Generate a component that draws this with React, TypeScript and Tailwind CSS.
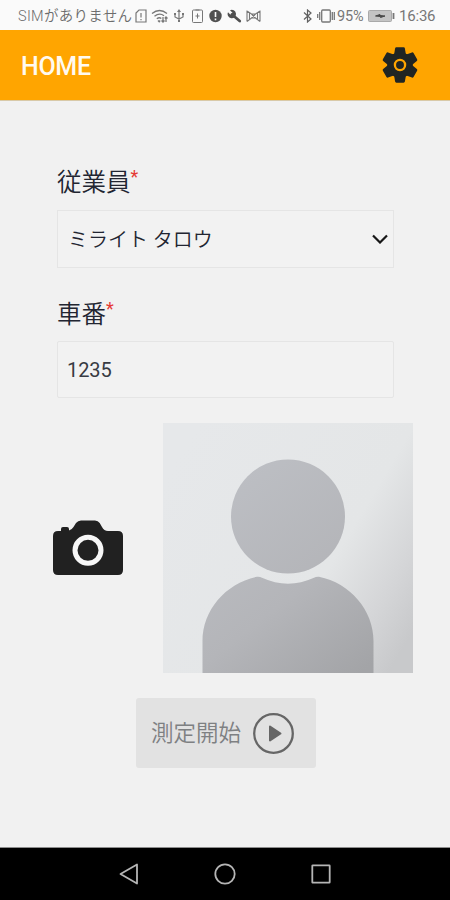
import { useState } from 'react';
import type { ReactNode } from 'react';

const employees = ['ミライト タロウ'];

function StatusBar() {
  return (
    <div className="flex h-[30px] items-center bg-[#fafafa] pl-[18px] pt-[2px] text-[#777777]">
      <span className="w-[117px] whitespace-nowrap pt-[2px] text-[14.5px] font-[350] leading-none tracking-[0.3px] text-[#6c6c6c]">SIMがありません</span>
      <svg width="12" height="14" viewBox="0 0 12 14" fill="none" stroke="currentColor" strokeWidth="1.2">
        <path d="M1 4 4 1h7v12H1zM6 4v4.500M6 10v1.300" />
      </svg>
      <svg className="ml-1" width="17" height="14" viewBox="0 0 17 14" fill="none" stroke="currentColor" strokeWidth="1.3">
        <path d="M1 4.5q7.500-6 15 0M3.500 7.300q5-4 9.500-.5M5.800 9.800q2.500-2 4.500-.3M7 11.500l1.200 1.300 1-1.300M12 8v5M10.500 11.500 12 13l1.500-1.500M15 13V8M13.800 9.500 15 8l1.500 1.500" />
      </svg>
      <svg className="ml-[5px]" width="12" height="14" viewBox="0 0 12 14" fill="none" stroke="currentColor" strokeWidth="1.2">
        <path d="M6 2v9M2 5.500V8l4 2 4-2V5.500" />
        <path d="m4 3 2-3 2 3zM1 4h2v2H1zM9 4h2v2H9zM5 11h2v2H5z" fill="currentColor" stroke="none" />
      </svg>
      <svg className="ml-[7px]" width="11" height="14" viewBox="0 0 11 14" fill="none" stroke="currentColor" strokeWidth="1">
        <rect x=".5" y="1" width="10" height="12.500" rx="1" />
        <path d="M3.500 1h4M5.500 4.500v5M3.500 7h4" />
      </svg>
      <svg className="ml-[6px] text-[#505050]" width="13" height="14" viewBox="0 0 13 14">
        <circle cx="6.500" cy="7" r="6.200" fill="currentColor" />
        <path d="M6.500 3v5M6.500 9.500v1.700" stroke="#fafafa" strokeWidth="1.600" />
      </svg>
      <svg className="ml-[5px] text-[#505050]" width="15" height="14" viewBox="0 0 15 14">
        <path d="M5 5.500 12.700 12" stroke="currentColor" strokeWidth="2.800" strokeLinecap="round" />
        <path d="M3 1.200A4.200 4.200 0 1 1 1 3.200L3.500 5.700 5.500 3.700Z" fill="currentColor" />
      </svg>
      <svg className="ml-1" width="15" height="14" viewBox="0 0 15 14" fill="none" stroke="currentColor" strokeWidth="1.100">
        <path d="M1 1.500v11M14 1.500v11M1 2l4.500 3h4L14 2M1 12.500 5.500 9h4l4.500 3.500M3.500 4v6M11.500 4v6M5.500 5l4 4M9.500 5l-4 4" />
      </svg>
      <svg className="ml-[42px] text-[#606060]" width="10" height="14" viewBox="0 0 10 14" fill="none" stroke="currentColor" strokeWidth="1.200">
        <path d="m1 3.500 7 6.500-3.500 3V1L8 4 1 10.500" />
      </svg>
      <svg className="ml-1" width="18" height="14" viewBox="0 0 18 14" fill="none" stroke="currentColor" strokeWidth="1.300">
        <rect x="4.700" y="1" width="8.600" height="12" rx="1" />
        <path d="M2.700 3v8M.7 5v4M15.300 3v8M17.300 3v8" />
      </svg>
      <span className="ml-[2px] w-[30px] pt-[2px] text-[14.500px] leading-none tracking-[-0.200px]">95%</span>
      <svg className="ml-[1px]" width="27" height="12" viewBox="0 0 27 12">
        <rect x=".5" y=".5" width="23" height="11" rx="1" fill="#c4c4c4" stroke="#a9a9a9" />
        <path d="M7.500 6 12 4.500v1l5 .5-4.500 1.500v-1Z" fill="#484848" stroke="#484848" />
        <path d="M25.500 3v6" stroke="currentColor" strokeWidth="1.800" />
      </svg>
      <span className="ml-[4px] pt-px text-[15px] leading-none tracking-[-0.200px]">16:36</span>
    </div>
  );
}

function GearIcon() {
  return (
    <svg width="36" height="36" viewBox="-18 -18 36 36" fill="#202523">
      <circle r="12.800" />
      {[0, 60, 120, 180, 240, 300].map((angle) => (
        <path
          key={angle}
          d="M-6-10-4.900-16.600Q-4.700-17.700-3.600-17.700H3.600Q4.700-17.700 4.900-16.600L6-10Z"
          transform={`rotate(${angle})`}
        />
      ))}
      <circle r="5.100" fill="none" stroke="#ffa500" strokeWidth="2.300" />
    </svg>
  );
}

function CameraIcon() {
  return (
    <svg width="70" height="56" viewBox="0 0 70 56">
      <path
        d="M5 11H8V9Q8 7 10 7H14Q16 7 16 9V10.500Q19 9.500 20.500 7L23 3Q25 .5 28 .5H42Q45 .5 46.700 3L49 7Q51 11 55 11H65Q70 11 70 16V50Q70 55 65 55H5Q0 55 0 50V16Q0 11 5 11Z"
        fill="#212121"
      />
      <circle cx="35" cy="30.300" r="13" fill="none" stroke="#f7f7f7" strokeWidth="5" />
    </svg>
  );
}

function PhotoPlaceholder() {
  return (
    <svg width="250" height="250" viewBox="0 0 250 250">
      <defs>
        <linearGradient id="backdrop" x1="0.050" y1="0.150" x2="1.050" y2="0.750">
          <stop offset="0" stopColor="#e6e8ea" />
          <stop offset=".64" stopColor="#e4e6e7" />
          <stop offset=".86" stopColor="#d4d5d7" />
          <stop offset="1" stopColor="#c8c9cb" />
        </linearGradient>
        <linearGradient id="person" gradientUnits="userSpaceOnUse" x1="70" y1="60" x2="210" y2="240">
          <stop offset="0" stopColor="#bcbec3" />
          <stop offset=".55" stopColor="#b4b5b9" />
          <stop offset="1" stopColor="#a3a4a7" />
        </linearGradient>
      </defs>
      <path d="M0 0H250V250H0Z" fill="url(#backdrop)" />
      <circle cx="125" cy="93.500" r="57" fill="url(#person)" />
      <path d="M39.500 250V218C39.500 187 63 160 94 153.700Q97 153.400 99 154.800Q125 166.500 151 154.800Q153 153.400 156 153.700C187 160 210.500 187 210.500 218V250Z" fill="url(#person)" />
    </svg>
  );
}

function Field({ label, children }: { label: string; children: ReactNode }) {
  return (
    <label className="block">
      <span className="flex h-9 items-start text-[24.500px] font-[350] leading-9 text-[#222531]">
        <span>{label}</span>
        <span className="font-['Roboto'] text-[18px] font-normal leading-[24px] text-[#e53935]">*</span>
      </span>
      {children}
    </label>
  );
}

export default function App() {
  const [employee, setEmployee] = useState(employees[0]);
  const [carNumber, setCarNumber] = useState('1235');

  return (
    <div className="flex h-[900px] w-[450px] flex-col overflow-hidden bg-[#f1f1f1] font-['Roboto','Noto_Sans_CJK_JP',sans-serif]">
      <StatusBar />
      <header className="flex h-[71px] items-center justify-between border-b border-[#d8c9a8] bg-[#ffa500] pl-[21px] pr-[32px]">
        <h1 className="pt-[3px] text-[25px] font-medium leading-none tracking-[-0.300px] text-[#fffaf0]">HOME</h1>
        <button aria-label="設定">
          <GearIcon />
        </button>
      </header>

      <main className="flex flex-1 flex-col pt-[64px]">
        <div className="flex flex-col gap-[29px] pl-[57px] pr-[56px]">
          <Field label="従業員">
            <span className="mt-[9px] flex h-[58px] items-center border border-[#e5e5e5] bg-[#f2f2f2] pl-[10px] pr-[5px]">
              <select
                value={employee}
                onChange={(e) => setEmployee(e.target.value)}
                className="flex-1 appearance-none bg-transparent pt-[2px] text-[20px] font-[350] leading-[30px] text-[#222531] outline-none"
              >
                {employees.map((name) => (
                  <option key={name}>{name}</option>
                ))}
              </select>
              <svg width="16" height="10" viewBox="0 0 16 10" fill="none" stroke="#171717" strokeWidth="2.200">
                <path d="m1 1.500 7 7 7-7" />
              </svg>
            </span>
          </Field>
          <Field label="車番">
            <input
              value={carNumber}
              onChange={(e) => setCarNumber(e.target.value)}
              className="mt-[8px] block h-[57px] w-full rounded-[2px] border border-[#e5e5e5] bg-[#f2f2f2] px-[9px] text-[20px] tracking-[-0.100px] text-[#383b43] outline-none"
            />
          </Field>
        </div>

        <div className="mt-[25px] flex items-center justify-between pl-[53px] pr-[37px]">
          <button aria-label="撮影">
            <CameraIcon />
          </button>
          <PhotoPlaceholder />
        </div>

        <button className="ml-[136px] mt-[25px] flex h-[70px] w-[180px] items-center gap-[12px] rounded-[3px] bg-[#e2e2e2] pl-[15px] text-[22.500px] font-[350] text-[#7e8082]">
          <span className="whitespace-nowrap pt-[2px]">測定開始</span>
          <svg width="41" height="41" viewBox="0 0 41 41">
            <circle cx="20.500" cy="20.500" r="19.300" fill="none" stroke="#666" strokeWidth="2.300" />
            <path d="M17 13.500 27.500 20.500 17 27.500Z" fill="#666" stroke="#666" strokeWidth="2" strokeLinejoin="round" />
          </svg>
        </button>
      </main>

      <nav className="flex h-[53px] items-center justify-between border-t border-[#8d8d8d] bg-black pl-[119px] pr-[119px]">
        <svg width="20" height="22" viewBox="0 0 20 22" fill="none" stroke="#b5b5b5" strokeWidth="1.800" strokeLinejoin="round">
          <path d="M18 1.500V20.500L1.500 11Z" />
        </svg>
        <svg width="22" height="22" viewBox="0 0 22 22" fill="none" stroke="#b5b5b5" strokeWidth="1.800">
          <circle cx="11" cy="11" r="9.700" />
        </svg>
        <svg width="20" height="20" viewBox="0 0 20 20" fill="none" stroke="#b5b5b5" strokeWidth="1.800">
          <rect x="1.300" y="1.300" width="17.400" height="17.400" rx=".5" />
        </svg>
      </nav>
    </div>
  );
}
